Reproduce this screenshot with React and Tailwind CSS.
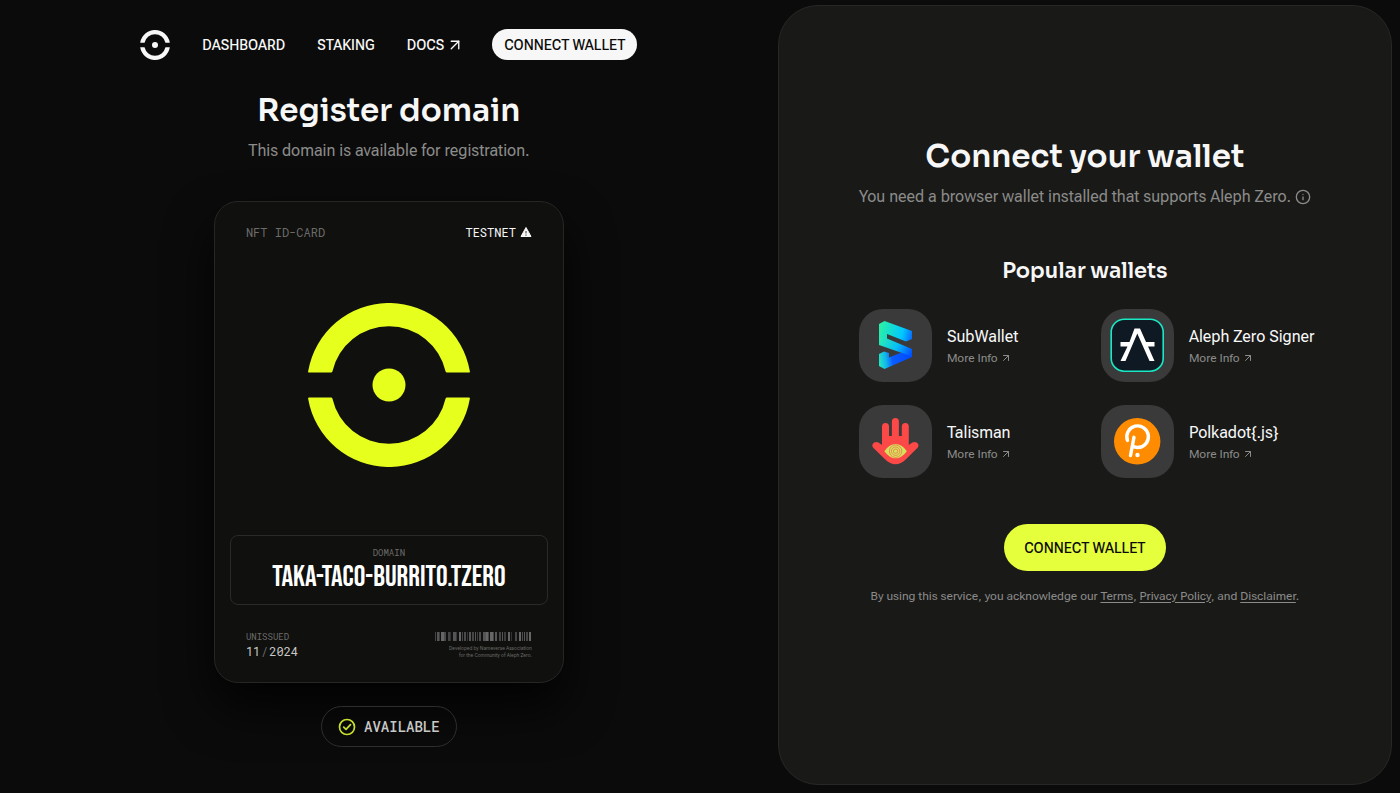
import React from 'react';
import { ArrowUpRight, Info } from 'lucide-react';

const wallets = [
  { name: 'SubWallet', Icon: SubWalletIcon },
  { name: 'Aleph Zero Signer', Icon: AlephZeroIcon },
  { name: 'Talisman', Icon: TalismanIcon },
  { name: 'Polkadot{.js}', Icon: PolkadotIcon },
];

// [x, width, shade]
const bars = [
  [0, 1, '#444'], [2, 2, '#555'], [4, 1, '#3a3a3a'], [6, 3, '#666'], [9, 2, '#4a4a4a'],
  [13, 2, '#444'], [15, 1, '#333'], [18, 3, '#555'], [21, 1, '#3a3a3a'], [24, 2, '#666'],
  [27, 1, '#444'], [29, 2, '#4a4a4a'], [32, 1, '#333'], [34, 2, '#555'], [37, 2, '#444'],
  [40, 1, '#555'], [42, 1, '#3a3a3a'], [44, 2, '#4a4a4a'], [48, 3, '#555'], [51, 2, '#666'],
  [53, 1, '#444'], [55, 3, '#666'], [58, 1, '#444'], [60, 2, '#555'], [64, 2, '#444'],
  [67, 1, '#555'], [69, 2, '#3a3a3a'], [73, 2, '#666'], [76, 1, '#333'], [80, 2, '#444'],
  [84, 2, '#666'], [87, 1, '#4a4a4a'], [89, 1, '#555'], [91, 2, '#444'], [94, 2, '#666'],
];

function Logo({ className }) {
  return (
    <svg viewBox="0 0 164 164" className={className} fill="currentColor" aria-hidden="true">
      <path d="M2 69.500Q.8 69.500 1.200 68A82 82 0 0 1 162.800 68Q163.200 69.500 162 69.500H140Q138.900 69.500 138.600 68.500A58 58 0 0 0 25.400 68.500Q25.100 69.500 24 69.500Z" />
      <path d="M2 94.500Q.8 94.500 1.200 96A82 82 0 0 0 162.800 96Q163.200 94.500 162 94.500H140Q138.900 94.500 138.600 95.500A58 58 0 0 1 25.400 95.500Q25.100 94.500 24 94.500Z" />
      <circle cx="82" cy="82" r="16.500" />
    </svg>
  );
}

function AvailableIcon() {
  return (
    <svg viewBox="0 0 18 18" className="size-[18px] text-[#c9e02a]" fill="none" stroke="currentColor" aria-hidden="true">
      <circle cx="9" cy="9" r="7.500" strokeWidth="1.700" />
      <path d="M5.700 9.200 8 11.400 12.500 6.700" strokeWidth="1.700" strokeLinecap="round" strokeLinejoin="round" />
    </svg>
  );
}

function SubWalletIcon() {
  return (
    <svg viewBox="0 0 73 73" className="size-full" aria-hidden="true">
      <defs>
        <linearGradient id="sub-top" x1="20" y1="20" x2="53" y2="28" gradientUnits="userSpaceOnUse">
          <stop stopColor="#29f0a5" />
          <stop offset="0.700" stopColor="#00c8ff" />
          <stop offset="1" stopColor="#0a6bff" />
        </linearGradient>
        <linearGradient id="sub-mid" x1="20" y1="28" x2="53" y2="44" gradientUnits="userSpaceOnUse">
          <stop stopColor="#2bf0ae" />
          <stop offset="0.550" stopColor="#08bff5" />
          <stop offset="1" stopColor="#0050ff" />
        </linearGradient>
        <linearGradient id="sub-low" x1="20" y1="50" x2="53" y2="46" gradientUnits="userSpaceOnUse">
          <stop stopColor="#22e6c0" />
          <stop offset="0.200" stopColor="#12b4ee" />
          <stop offset="0.400" stopColor="#0a5cff" />
          <stop offset="1" stopColor="#0048ff" />
        </linearGradient>
      </defs>
      <path d="M53 40V48L25.500 60 20 57V45L25 42.500 30 44V48.500L41 44Z" fill="url(#sub-low)" />
      <path d="M20 15 28 19V29.500L53 40V48L46 45 20 36Z" fill="url(#sub-mid)" />
      <path d="M20 15 25.500 12 53 22V30L47 32.500 28 25V30L20 28Z" fill="url(#sub-top)" />
    </svg>
  );
}

function AlephZeroIcon() {
  return (
    <svg viewBox="0 0 73 73" className="size-full" aria-hidden="true">
      <rect x="10.200" y="10.200" width="52" height="52" rx="13" fill="#0f1923" stroke="#18e8c4" strokeWidth="1.600" />
      <path
        d="M33.500 19.500H39L53.500 52H48.500L36.300 24.500 24.500 52H19.500L26.500 37.500H19.500V33H28.500ZM45 33H53.500V37.500H47Z"
        fill="#fff"
      />
    </svg>
  );
}

function TalismanIcon() {
  return (
    <svg viewBox="0 0 73 73" className="size-full" aria-hidden="true">
      <path
        d="M23 21.500a3.500 3.500 0 0 1 7 0V31H32.900V16.500a3.500 3.500 0 0 1 7 0V31H42.800V21.500a3.500 3.500 0 0 1 7 0V40L53.300 37.500C57.500 35.500 61.500 39.500 58.300 43L47 54.300C40 61 33 61 26 54.300L14.500 43C11.300 39.500 15.500 35.500 19.500 37.500L23 40Z"
        fill="#fd4848"
      />
      <path d="M25.400 46.200C32 36.700 41.200 36.700 47.800 46.200 41.200 55.700 32 55.700 25.400 46.200Z" fill="#d5e35c" />
      <g fill="none" stroke="#f26a4a" strokeWidth="0.700">
        <circle cx="36.600" cy="46.200" r="6.200" />
        <circle cx="36.600" cy="46.200" r="4.200" />
        <circle cx="36.600" cy="46.200" r="2.200" />
      </g>
    </svg>
  );
}

function PolkadotIcon() {
  return (
    <svg viewBox="0 0 73 73" className="size-full" aria-hidden="true">
      <circle cx="36.200" cy="36.300" r="23.200" fill="#ff8c00" />
      <path
        d="M26.500 35.500A10.800 10.800 0 1 1 36.700 42.500C34.500 42.500 33 42 32 41.200M33 32.300 29.500 50.500"
        fill="none"
        stroke="#fff"
        strokeWidth="3.400"
        strokeLinecap="round"
        strokeLinejoin="round"
      />
      <circle cx="36.500" cy="50" r="2.200" fill="#fff" />
    </svg>
  );
}

function Navbar() {
  return (
    <nav className="flex h-[31px] items-center text-sm font-medium text-[#f7f7f7]">
      <a href="#home" aria-label="Home">
        <Logo className="size-[30px]" />
      </a>
      <a href="#dashboard" className="ml-8">DASHBOARD</a>
      <a href="#staking" className="ml-8">STAKING</a>
      <a href="#docs" className="ml-8 flex items-center gap-0.5">
        DOCS <ArrowUpRight size={18} strokeWidth={1.8} />
      </a>
      <button type="button" className="ml-7 h-[31px] rounded-full bg-[#f7f7f7] px-3 text-[#0b0b0b]">
        CONNECT WALLET
      </button>
    </nav>
  );
}

function DomainCard() {
  return (
    <article className="mt-[38px] flex h-[482px] w-[350px] flex-col rounded-3xl border border-[#262625] bg-[#10100e] px-[15px] pt-[22px] pb-[23px] font-['Roboto_Mono','Liberation_Mono',monospace] shadow-[0_24px_48px_rgba(0,0,0,0.8)]">
      <div className="flex items-center justify-between px-4 text-xs text-[#6b6b69]">
        <span>NFT ID-CARD</span>
        <span className="flex items-center gap-1 text-[#f7f7f7]">
          TESTNET
          <svg viewBox="0 0 12 12" className="size-3" aria-hidden="true">
            <path d="M6 1.500 11 10.500H1Z" fill="currentColor" stroke="currentColor" strokeLinejoin="round" />
            <path d="M6 5V7.500M6 8.500V9.700" stroke="#555" strokeWidth="1.200" />
          </svg>
        </span>
      </div>
      <div className="flex grow items-center justify-center pb-[5px] text-[#e6ff1c]">
        <Logo className="size-[164px]" />
      </div>
      <div className="flex h-[70px] flex-col items-center rounded-lg border border-[#2a2a28] pt-[11px] text-center">
        <p className="text-[9px] leading-3 text-[#6b6b69]">DOMAIN</p>
        <h2 className="mt-px font-['Bebas_Neue','Liberation_Sans_Narrow',sans-serif] text-[29px] leading-9 text-white">
          TAKA-TACO-BURRITO.TZERO
        </h2>
      </div>
      <div className="mt-6 flex items-start justify-between px-4">
        <div>
          <p className="text-[9px] leading-4 text-[#6b6b69]">UNISSUED</p>
          <p className="text-xs leading-3 text-[#c8c8c6]">
            11<span className="px-0.5 font-['Roboto',sans-serif] text-[#6b6b69]">/</span>2024
          </p>
        </div>
        <div className="mt-[3px] flex flex-col items-end text-right font-['Roboto_Flex','Roboto',sans-serif] text-[5px] leading-[7px] text-[#6b6b69]">
          <svg viewBox="0 0 97 9" className="mb-1 h-[9px] w-[97px]" aria-hidden="true">
            {bars.map(([x, width, shade]) => (
              <rect key={x} x={x} width={width} height="9" fill={shade} />
            ))}
          </svg>
          <p>Developed by Nameverse Association</p>
          <p>for the Community of Aleph Zero.</p>
        </div>
      </div>
    </article>
  );
}

function Wallet({ name, Icon }) {
  return (
    <li className="flex items-center gap-[15px]">
      <div className="size-[73px] shrink-0 rounded-3xl bg-[#3a3a3a]">
        <Icon />
      </div>
      <div>
        <h4 className="text-base leading-6 whitespace-nowrap text-[#f7f7f7]">{name}</h4>
        <a href="#more-info" className="flex items-center gap-0.5 text-xs leading-[18px] text-[#8b8b8a]">
          More Info <ArrowUpRight size={12} strokeWidth={2} />
        </a>
      </div>
    </li>
  );
}

function ConnectPanel() {
  return (
    <section className="flex w-full flex-col items-center rounded-[40px] border border-[#272725] bg-[#191917] px-8 pt-[131px] pb-16">
      <h2 className="font-['Sora','Inter',sans-serif] text-[31px] leading-10 font-semibold">Connect your wallet</h2>
      <p className="mt-2 flex items-center gap-1 text-base leading-6 text-[#8b8b8a]">
        You need a browser wallet installed that supports Aleph Zero.
        <Info size={16} strokeWidth={2} />
      </p>
      <h3 className="mt-12 font-['Sora','Inter',sans-serif] text-[21px] leading-7 font-semibold">Popular wallets</h3>
      <ul className="mt-6 grid w-full max-w-[452px] grid-cols-2 gap-x-8 gap-y-[23px]">
        {wallets.map((wallet) => (
          <Wallet key={wallet.name} {...wallet} />
        ))}
      </ul>
      <button type="button" className="mt-[46px] h-[47px] rounded-full bg-[#e6ff3c] px-5 text-sm font-medium text-[#0b0b0b]">
        CONNECT WALLET
      </button>
      <p className="mt-4 text-xs leading-[18px] text-[#8b8b8a]">
        By using this service, you acknowledge our{' '}
        <a href="#terms" className="underline underline-offset-2">Terms</a>,{' '}
        <a href="#privacy" className="underline underline-offset-2">Privacy Policy</a>, and{' '}
        <a href="#disclaimer" className="underline underline-offset-2">Disclaimer</a>.
      </p>
    </section>
  );
}

function App() {
  return (
    <div className="grid min-h-screen grid-cols-[5fr_4fr] bg-[#0b0b0b] font-['Roboto_Flex','Roboto',sans-serif] text-[#f7f7f7]">
      <main className="flex flex-col items-center pt-[29px]">
        <Navbar />
        <h1 className="mt-[31px] font-['Sora','Inter',sans-serif] text-[31px] leading-10 font-semibold">Register domain</h1>
        <p className="mt-2 text-base leading-6 text-[#8b8b8a]">This domain is available for registration.</p>
        <DomainCard />
        <div className="mt-[23px] flex h-[41px] items-center gap-2 rounded-full border border-[#2e2e2d] px-4 font-['Roboto_Mono','Liberation_Mono',monospace] text-sm font-medium text-[#c8c8c6]">
          <AvailableIcon />
          AVAILABLE
        </div>
      </main>
      <div className="flex pt-[5px] pr-2 pb-2">
        <ConnectPanel />
      </div>
    </div>
  );
}

export default App;
